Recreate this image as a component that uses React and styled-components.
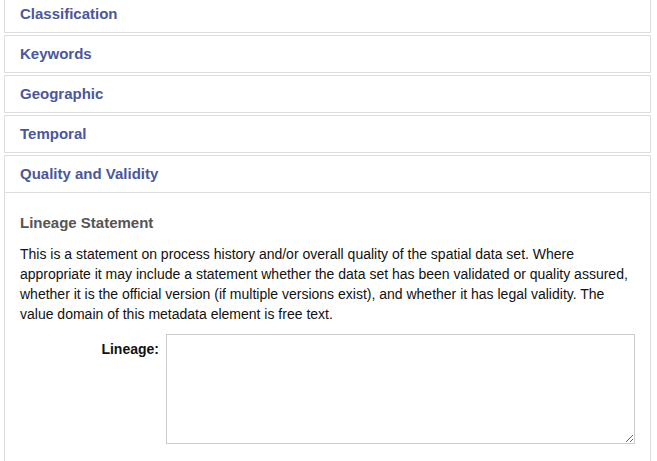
import React from "react";
import styled, { createGlobalStyle } from "styled-components";

const GlobalStyle = createGlobalStyle`
    html, body {
        margin: 0;
        padding: 0;
        background: #ffffff;
        font-family: "Liberation Sans", Arial, sans-serif;
        overflow: hidden;
    }
`

const sections = ["Classification", "Keywords", "Geographic", "Temporal"];

function App() {
    return (
        <Page>
            <GlobalStyle />
            {sections.map(name => (
                <Panel key={name}>
                    <PanelHeading>
                        <PanelTitle>{name}</PanelTitle>
                    </PanelHeading>
                </Panel>
            ))}
            <Panel open>
                <PanelHeading>
                    <PanelTitle>Quality and Validity</PanelTitle>
                </PanelHeading>
                <PanelBody>
                    <SubHeading>Lineage Statement</SubHeading>
                    <Description>
                        This is a statement on process history and/or overall quality of the spatial data set.
                        Where appropriate it may include a statement whether the data set has been validated or
                        quality assured, whether it is the official version (if multiple versions exist), and
                        whether it has legal validity. The value domain of this metadata element is free text.
                    </Description>
                    <FormRow>
                        <Label htmlFor="lineage">Lineage:</Label>
                        <TextArea id="lineage" />
                    </FormRow>
                </PanelBody>
            </Panel>
        </Page>
    )
}

const Page = styled.div`
    margin: -5px 6px 0 4px;
    display: flex;
    flex-direction: column;
    gap: 2px;
`
const Panel = styled.div`
    border: 1px solid #dddddd;
    border-bottom: ${p => p.open ? "none" : "1px solid #dddddd"};
    background: #ffffff;
    min-height: ${p => p.open ? "320px" : "0"};
`
const PanelHeading = styled.div`
    box-sizing: border-box;
    height: 36px;
    padding: 0 15px 2px;
    display: flex;
    align-items: center;
`
const PanelTitle = styled.h4`
    margin: 0;
    font-family: "Liberation Sans", Arial, sans-serif;
    font-size: 15px;
    font-weight: bold;
    color: #4b579a;
    line-height: 17px;
`
const PanelBody = styled.div`
    border-top: 1px solid #dddddd;
    padding: 21px 15px 15px;
`
const SubHeading = styled.h5`
    margin: 0 0 13px;
    font-family: "Liberation Sans", Arial, sans-serif;
    font-size: 15px;
    font-weight: bold;
    color: #555555;
    line-height: 17px;
`
const Description = styled.p`
    margin: 0 0 10px;
    font-family: "Liberation Sans", Arial, sans-serif;
    font-size: 14px;
    line-height: 20px;
    color: #111111;
`
const FormRow = styled.div`
    display: grid;
    grid-template-columns: 139px 469px;
    column-gap: 7px;
    align-items: start;
`
const Label = styled.label`
    text-align: right;
    font-family: "Liberation Sans", Arial, sans-serif;
    font-size: 14px;
    font-weight: bold;
    color: #111111;
    padding-top: 7px;
`
const TextArea = styled.textarea`
    box-sizing: border-box;
    width: 469px;
    height: 110px;
    margin: 0;
    border: 1px solid #cccccc;
    resize: both;
`

export default App;
